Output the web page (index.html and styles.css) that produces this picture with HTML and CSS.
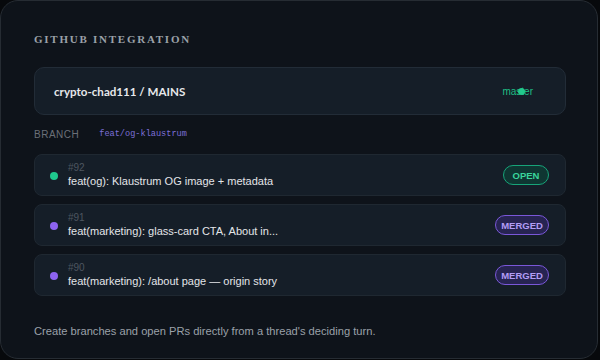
FILE: index.html
```html
<!DOCTYPE html>
<html>
<head>
<meta charset="utf-8">
<link rel="stylesheet" href="styles.css">
</head>
<body>
<div class="card">
  <h2 class="title">GITHUB INTEGRATION</h2>
  <div class="repo">
    <span class="repo-name">crypto-chad111 / MAINS</span>
    <span class="branch-tag">master<span class="live-dot"></span></span>
  </div>
  <div class="branch-row">
    <span class="branch-label">BRANCH</span>
    <span class="branch-name">feat/og-klaustrum</span>
  </div>
  <div class="prs">
    <div class="pr">
      <span class="dot dot-open"></span>
      <div class="pr-text">
        <span class="pr-num">#92</span>
        <span class="pr-title">feat(og): Klaustrum OG image + metadata</span>
      </div>
      <span class="badge badge-open">OPEN</span>
    </div>
    <div class="pr">
      <span class="dot dot-merged"></span>
      <div class="pr-text">
        <span class="pr-num">#91</span>
        <span class="pr-title">feat(marketing): glass-card CTA, About in...</span>
      </div>
      <span class="badge badge-merged">MERGED</span>
    </div>
    <div class="pr">
      <span class="dot dot-merged"></span>
      <div class="pr-text">
        <span class="pr-num">#90</span>
        <span class="pr-title">feat(marketing): /about page — origin story</span>
      </div>
      <span class="badge badge-merged">MERGED</span>
    </div>
  </div>
  <p class="footer">Create branches and open PRs directly from a thread's deciding turn.</p>
</div>
</body>
</html>
```
FILE: styles.css
```css
* { box-sizing: border-box; }
html, body { margin: 0; padding: 0; }
body {
  width: 600px;
  height: 360px;
  background: #07090c;
  font-family: "Liberation Sans", Arial, sans-serif;
  overflow: hidden;
}
.card {
  width: 598px;
  height: 359px;
  background: #0e131a;
  border: 1px solid #262c33;
  border-radius: 18px;
  padding: 30px 33px 0 33px;
  display: flex;
  flex-direction: column;
}
.title {
  margin: 0;
  font-family: "Liberation Serif", "Times New Roman", serif;
  font-weight: 700;
  font-size: 11px;
  letter-spacing: 1.75px;
  color: #9ba1a8;
  line-height: 16px;
}
.repo {
  margin-top: 20px;
  height: 48px;
  width: 532px;
  background: #151e28;
  border: 1px solid #222c37;
  border-radius: 10px;
  display: flex;
  align-items: center;
  justify-content: space-between;
  padding: 0 32px 0 19px;
}
.repo-name {
  font-family: "Lato", sans-serif;
  font-weight: 700;
  font-size: 11.6px;
  color: #e6e8eb;
}
.branch-tag {
  position: relative;
  font-family: "Liberation Sans", Arial, sans-serif;
  font-size: 10px;
  color: #1fbf85;
}
.live-dot {
  position: absolute;
  left: 16px;
  top: 2px;
  width: 7px;
  height: 7px;
  border-radius: 50%;
  background: #22c98c;
}
.branch-row {
  margin-top: 12px;
  display: flex;
  align-items: center;
  gap: 20px;
  height: 14px;
}
.branch-label {
  font-size: 10px;
  letter-spacing: 0.5px;
  color: #6b7078;
}
.branch-name {
  font-family: "Liberation Mono", "DejaVu Sans Mono", monospace;
  font-size: 8.6px;
  color: #7d6fd8;
}
.prs {
  margin-top: 13px;
  display: flex;
  flex-direction: column;
  gap: 8px;
  width: 532px;
}
.pr {
  height: 42px;
  background: #151e28;
  border: 1px solid #1f2831;
  border-radius: 8px;
  display: flex;
  align-items: center;
  padding: 0 16px 0 15px;
}
.dot {
  width: 8px;
  height: 8px;
  border-radius: 50%;
  margin-top: 1px;
  flex-shrink: 0;
}
.dot-open { background: #1fc98e; }
.dot-merged { background: #8d63f0; }
.pr-text {
  margin-left: 10px;
  display: flex;
  flex-direction: column;
  flex: 1;
  margin-top: 0;
}
.pr-num {
  font-size: 10px;
  line-height: 12px;
  color: #4e5660;
}
.pr-title {
  font-size: 11px;
  line-height: 15px;
  color: #e3e5e8;
}
.badge {
  height: 20px;
  border-radius: 10px;
  display: flex;
  align-items: center;
  justify-content: center;
  font-family: "Liberation Sans", Arial, sans-serif;
  font-weight: 700;
  font-size: 9.5px;
}
.badge-open {
  width: 46px;
  border: 1px solid #17a479;
  background: #0f3632;
  color: #3ad49b;
}
.badge-merged {
  width: 54px;
  border: 1px solid #7a57d9;
  background: #272452;
  color: #b29cf5;
}
.footer {
  margin: 29px 0 0 0;
  font-size: 11.15px;
  color: #9ba1a9;
}
```
